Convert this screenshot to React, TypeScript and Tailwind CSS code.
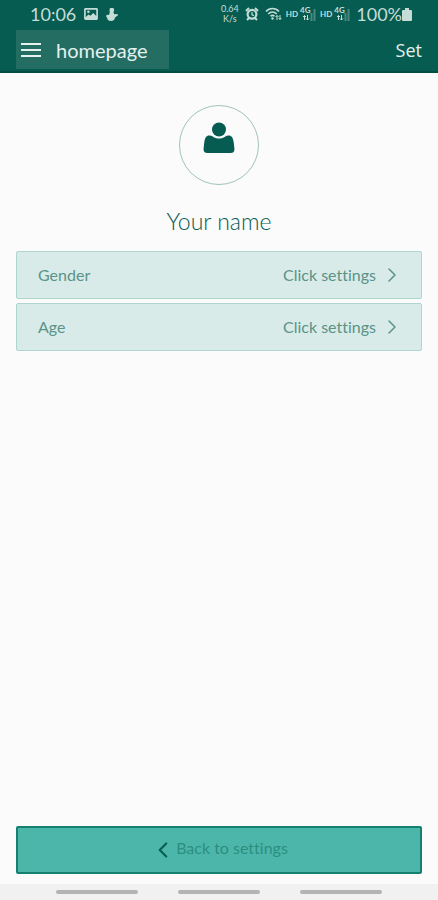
import { ChevronLeft, ChevronRight } from "lucide-react";

interface Setting {
  id: string;
  label: string;
}

const settings: Setting[] = [
  { id: "gender", label: "Gender" },
  { id: "age", label: "Age" },
];

function PictureIcon() {
  return (
    <svg width="14" height="12" viewBox="0 0 15 13" aria-hidden="true">
      <path
        fillRule="evenodd"
        d="M1.500 0h12A1.500 1.500 0 0 1 15 1.500v10a1.500 1.500 0 0 1-1.500 1.500h-12A1.500 1.500 0 0 1 0 11.500v-10A1.500 1.500 0 0 1 1.500 0Zm.3 1.800v8l3-2.800 2 1.500 3.200-3 3.200 3.300v-7Z"
        fill="currentColor"
      />
      <circle cx="4.700" cy="4" r="1.400" fill="currentColor" />
    </svg>
  );
}

function TouchIcon() {
  return (
    <svg width="12" height="13" viewBox="0 0 12 13" fill="currentColor" aria-hidden="true">
      <path d="M3.500 2a2.300 2.300 0 0 1 4.600 0c0 1-.5 1.600-.6 2.400l.7 1.800 3.300-.2.500 1.200-3 2.300c-.2 2.200-1.600 3.500-3.800 3.500-2.400 0-4-1.200-4-3L0 8l1-1.300 2 .3.800-2.500Z" />
    </svg>
  );
}

function AlarmIcon() {
  return (
    <svg width="14" height="14" viewBox="0 0 14 14" fill="none" stroke="currentColor" aria-hidden="true">
      <circle cx="7" cy="7.300" r="4.400" strokeWidth="2.200" />
      <path d="M7 5v2.800l2 .8" strokeWidth="1.200" />
      <path d="M1 4 4 1M13 4 10 1M2 13l2-2M12 13l-2-2" strokeWidth="2" />
    </svg>
  );
}

function WifiIcon() {
  return (
    <svg width="17" height="14" viewBox="0 0 17 14" fill="none" stroke="currentColor" aria-hidden="true">
      <path d="M1 4.500c3.500-4 9.500-4 13 0M3.200 7c2.500-2.700 6-2.700 8.500 0M5.500 9.300c1.200-1.200 2.800-1.200 4 0" strokeWidth="1.600" />
      <circle cx="7.500" cy="11.500" r="1.200" fill="currentColor" stroke="none" />
      <path d="M12 13V8.500m-1.500 1.500L12 8.500l1.500 1.500M15 8v4.500M13.600 11l1.400 1.500 1.400-1.500" strokeWidth="1" />
    </svg>
  );
}

function MobileSignal() {
  return (
    <span className="flex items-center gap-0.5">
      <span className="text-[8px] font-bold">HD</span>
      <span className="relative h-4 w-4">
        <svg width="16" height="16" viewBox="0 0 16 16" fill="currentColor" aria-hidden="true">
          <path d="M4.500 14V9.500M3 11l1.500-1.500L6 11M7.500 9v5M6 12.500 7.500 14 9 12.500" fill="none" stroke="currentColor" />
          <path d="M10.500 7h2v8h-2ZM13.500 3h2v12h-2Z" opacity=".35" />
        </svg>
        <span className="absolute left-0 top-0 text-[8px] leading-[8px] font-bold">4G</span>
      </span>
    </span>
  );
}

function BatteryIcon() {
  return (
    <svg width="10" height="13" viewBox="0 0 10 13" fill="currentColor" aria-hidden="true">
      <path d="M3 0h4v2h2q1 0 1 1v9q0 1-1 1H1q-1 0-1-1V3q0-1 1-1h2Z" />
    </svg>
  );
}

function StatusBar() {
  return (
    <div className="flex h-7 items-center justify-between pr-[26px] pl-[30px] text-[#c5dcd7]">
      <div className="flex items-center gap-2">
        <span className="text-lg">10:06</span>
        <PictureIcon />
        <TouchIcon />
      </div>
      <div className="flex items-center gap-1">
        <span className="mr-0.5 flex flex-col items-center text-[9px] leading-[10px]">
          <span>0.64</span>
          <span>K/s</span>
        </span>
        <AlarmIcon />
        <span className="ml-0.5 flex">
          <WifiIcon />
        </span>
        <MobileSignal />
        <MobileSignal />
        <span className="flex items-center">
          <span className="ml-0.5 text-lg">100%</span>
          <BatteryIcon />
        </span>
      </div>
    </div>
  );
}

function Header() {
  return (
    <header className="border-b-2 border-[#034d43] bg-[#065c51]">
      <StatusBar />
      <div className="flex items-start justify-between px-4 pt-0.5 pb-0.5">
        <button
          type="button"
          className="flex h-[39px] w-[153px] items-center gap-[15px] bg-[#246d63] pl-[5px] text-xl text-[#e4f1ee]"
        >
          <svg width="20" height="16" viewBox="0 0 20 16" aria-hidden="true">
            <path d="M0 2h20M0 8h20M0 14h20" stroke="currentColor" strokeWidth="2" />
          </svg>
          homepage
        </button>
        <button type="button" className="h-[39px] font-['Open_Sans',sans-serif] text-lg text-[#e4f1ee]">
          Set
        </button>
      </div>
    </header>
  );
}

function Avatar() {
  return (
    <div className="flex h-20 w-20 justify-center rounded-full border border-[#9fc3bc] pt-4">
      <svg width="32" height="32" viewBox="0 0 32 32" fill="#065c51" aria-hidden="true">
        <circle cx="16" cy="7.500" r="7" />
        <path d="M5.500 13.500c1.600-.3 3 .1 4.200 1 3.800 2.800 8.800 2.800 12.600 0 1.200-.9 2.600-1.300 4.200-1 2.300.5 3.700 2.500 4.300 7.500l.6 5.500c.3 3-1 4.500-4 4.500H4.600c-3 0-4.300-1.500-4-4.500l.6-5.500c.6-5 2-7 4.300-7.500Z" />
      </svg>
    </div>
  );
}

export default function App() {
  return (
    <div className="flex min-h-screen flex-col bg-[#fbfbfb] font-['Lato',sans-serif] [font-variant-ligatures:none]">
      <Header />

      <main className="flex flex-1 flex-col px-4 pb-[10px]">
        <div className="flex flex-col items-center pt-8">
          <Avatar />
          <h1 className="mt-5 text-[23px] leading-8 font-light text-[#065c51]">Your name</h1>
        </div>

        <div className="mt-[14px] flex flex-col gap-1">
          {settings.map((setting) => (
            <button
              key={setting.id}
              type="button"
              className="flex h-12 items-center justify-between rounded-xs border border-[#b0d4ce] bg-[#d8ebe8] pr-[17px] pl-[21px] text-base text-[#5a9388]"
            >
              <span>{setting.label}</span>
              <span className="flex items-center gap-1">
                Click settings
                <ChevronRight size={24} strokeWidth={1.5} />
              </span>
            </button>
          ))}
        </div>

        <button
          type="button"
          className="mt-auto flex h-12 items-center justify-center rounded-xs border-2 border-[#15806f] bg-[#4db6aa] pb-1 text-base text-[#2b8e81]"
        >
          <ChevronLeft size={26} strokeWidth={2} className="mt-1 text-[#066054]" />
          Back to settings
        </button>
      </main>

      {/* System gesture bar */}
      <div className="flex h-4 items-center justify-center gap-10 bg-[#f1f1f1]">
        <span className="h-1 w-[82px] rounded-full bg-[#b4b4b4]" />
        <span className="h-1 w-[82px] rounded-full bg-[#b4b4b4]" />
        <span className="h-1 w-[82px] rounded-full bg-[#b4b4b4]" />
      </div>
    </div>
  );
}
